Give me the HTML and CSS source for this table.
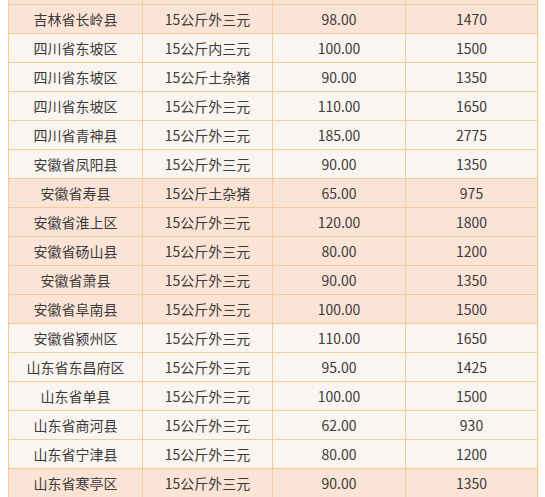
FILE: index.html
```html
<!DOCTYPE html>
<html lang="zh-CN">
<head>
<meta charset="utf-8">
<title>价格表</title>
<link rel="stylesheet" href="styles.css">
</head>
<body>
<div class="wrap">
<table class="price">
<colgroup><col class="c1"><col class="c2"><col class="c3"><col class="c4"></colgroup>
<tbody>
<tr class="hi"><td></td><td></td><td></td><td></td></tr>
<tr class="hi"><td>吉林省长岭县</td><td>15公斤外三元</td><td>98.00</td><td>1470</td></tr>
<tr><td>四川省东坡区</td><td>15公斤内三元</td><td>100.00</td><td>1500</td></tr>
<tr><td>四川省东坡区</td><td>15公斤土杂猪</td><td>90.00</td><td>1350</td></tr>
<tr><td>四川省东坡区</td><td>15公斤外三元</td><td>110.00</td><td>1650</td></tr>
<tr><td>四川省青神县</td><td>15公斤外三元</td><td>185.00</td><td>2775</td></tr>
<tr><td>安徽省凤阳县</td><td>15公斤外三元</td><td>90.00</td><td>1350</td></tr>
<tr class="hi"><td>安徽省寿县</td><td>15公斤土杂猪</td><td>65.00</td><td>975</td></tr>
<tr class="hi"><td>安徽省淮上区</td><td>15公斤外三元</td><td>120.00</td><td>1800</td></tr>
<tr class="hi"><td>安徽省砀山县</td><td>15公斤外三元</td><td>80.00</td><td>1200</td></tr>
<tr class="hi"><td>安徽省萧县</td><td>15公斤外三元</td><td>90.00</td><td>1350</td></tr>
<tr class="hi"><td>安徽省阜南县</td><td>15公斤外三元</td><td>100.00</td><td>1500</td></tr>
<tr><td>安徽省颍州区</td><td>15公斤外三元</td><td>110.00</td><td>1650</td></tr>
<tr><td>山东省东昌府区</td><td>15公斤外三元</td><td>95.00</td><td>1425</td></tr>
<tr><td>山东省单县</td><td>15公斤外三元</td><td>100.00</td><td>1500</td></tr>
<tr><td>山东省商河县</td><td>15公斤外三元</td><td>62.00</td><td>930</td></tr>
<tr><td>山东省宁津县</td><td>15公斤外三元</td><td>80.00</td><td>1200</td></tr>
<tr class="hi"><td>山东省寒亭区</td><td>15公斤外三元</td><td>90.00</td><td>1350</td></tr>
</tbody>
</table>
</div>
</body>
</html>
```
FILE: styles.css
```css
html, body {
  margin: 0;
  padding: 0;
  background: #ffffff;
}
body {
  overflow: hidden;
  height: 497px;
}
.wrap {
  padding-left: 8px;
}
.price {
  margin-top: -25px;
  border-collapse: collapse;
  table-layout: fixed;
  width: 529px;
  font-family: "Noto Sans CJK SC", "Microsoft YaHei", sans-serif;
  font-size: 14px;
  color: #3b3b3b;
  box-shadow: 2px 0 0 #fdf6e6;
}
.c1 { width: 134px; }
.c2 { width: 130px; }
.c3 { width: 133px; }
.c4 { width: 132px; }
.price td {
  height: 28px;
  padding: 0;
  line-height: 28px;
  text-align: center;
  border: 1px solid #f2cd98;
  background: #faf5f1;
  white-space: nowrap;
}
.price tr.hi td {
  background: #fbe4d6;
}
```
